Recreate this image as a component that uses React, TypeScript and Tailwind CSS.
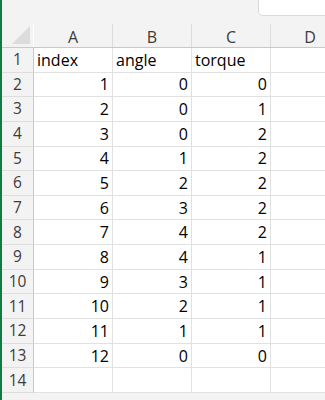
import React from 'react'

const rows: (string | number)[][] = [
  ['index', 'angle', 'torque'],
  [1, 0, 0],
  [2, 0, 1],
  [3, 0, 2],
  [4, 1, 2],
  [5, 2, 2],
  [6, 3, 2],
  [7, 4, 2],
  [8, 4, 1],
  [9, 3, 1],
  [10, 2, 1],
  [11, 1, 1],
  [12, 0, 0],
  ['', '', ''],
]

const cols = ['A', 'B', 'C', 'D']

export default function App() {
  return (
    <div className="w-[325px] h-[400px] overflow-hidden bg-[#f3f3f3] border-l-2 border-l-[#107c41] font-['Open_Sans',sans-serif]">
      {/* formula bar strip */}
      <div className="h-[24px] flex justify-end">
        <div className="w-[67px] h-[16px] bg-white border-l border-b border-[#d9d9d9] rounded-bl-[5px]" />
      </div>

      {/* column headers */}
      <div className="flex h-[24px] border-b border-[#c8c8c8]">
        <div className="w-[32px] shrink-0 relative border-r border-[#ffffff]">
          <div className="absolute right-[3px] bottom-[3px] w-0 h-0 border-l-[18px] border-l-transparent border-b-[18px] border-b-[#dcdcdc]" />
        </div>
        {cols.map((c) => (
          <div
            key={c}
            className="w-[79px] shrink-0 flex items-center justify-center text-[16px] text-[#3c3c3c] border-r border-[#dcdcdc] pt-[2px]"
          >
            {c}
          </div>
        ))}
      </div>

      {/* rows */}
      {rows.map((r, i) => (
        <div key={i} className="flex h-[24.65px]">
          <div className="w-[32px] shrink-0 flex items-center justify-center text-[15.5px] text-[#3c3c3c] border-r border-[#c8c8c8] border-b border-b-[#dedede]">
            {i + 1}
          </div>
          {r.map((v, j) => (
            <div
              key={j}
              className={
                typeof v === 'number'
                  ? 'w-[79px] shrink-0 bg-white border-r border-b border-[#e1e1e1] flex items-center justify-end pr-[3px] text-[16px] text-black'
                  : 'w-[79px] shrink-0 bg-white border-r border-b border-[#e1e1e1] flex items-center justify-start pl-[3px] text-[16px] text-black'
              }
            >
              {v}
            </div>
          ))}
          <div className="w-[79px] shrink-0 bg-white border-r border-b border-[#e1e1e1]" />
        </div>
      ))}
    </div>
  )
}
